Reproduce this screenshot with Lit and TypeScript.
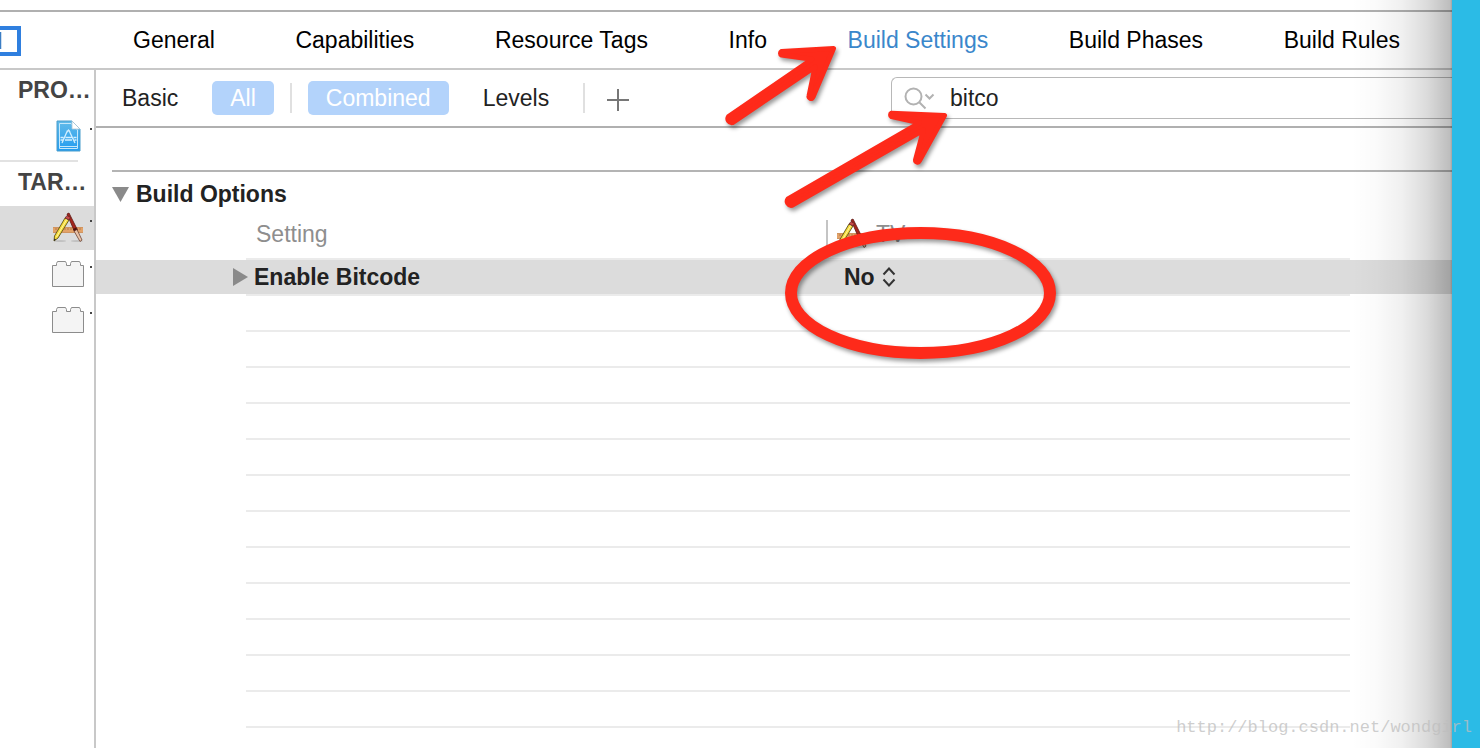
import { LitElement, html, css } from "lit";
import { customElement, state } from "lit/decorators.js";

const toolsIcon = html`
  <svg class="tools" width="32" height="32" viewBox="0 0 32 32" aria-hidden="true">
    <ellipse cx="8" cy="29" rx="6" ry="1" fill="#000" opacity=".12" />
    <ellipse cx="25" cy="29" rx="6" ry="1" fill="#000" opacity=".12" />
    <rect x="1" y="15" width="30" height="6" fill="#e2a268" />
    <path d="M1 15.5h30M1 20.5h30" stroke="#d09460" stroke-width="1" />
    <path d="M4 16v2M7 16v2M10 16v2M13 16v2M16 16v2M19 16v2M22 16v2M25 16v2M28 16v2" stroke="#b57a48" stroke-width="1" />
    <path d="M15 2l2-1 8.500 17-3 1.500z" fill="#a5261d" stroke="#5e1712" stroke-width=".8" />
    <path d="M22 19l3-1.500 5 10.500-2 1.500z" fill="#e9c3a8" stroke="#6c4030" stroke-width=".8" />
    <path d="M21.500 18l3-1.500" stroke="#47120e" stroke-width="2" />
    <path d="M13 6l4 2L6 26l-4 3 .5-5z" fill="#f6dc3c" stroke="#5d5119" stroke-width=".9" />
    <path d="M15 7L4.500 25" stroke="#fff6a0" stroke-width="1" />
    <path d="M13 6l2-2.500 3.500 2L17 8z" fill="#c84a4a" stroke="#5c2020" stroke-width=".7" />
    <path d="M2.300 26.500L2 29l2-1.400z" fill="#222" />
  </svg>
`;

const projectIcon = html`
  <svg width="26" height="32" viewBox="0 0 26 32" aria-hidden="true">
    <defs>
      <linearGradient id="doc" x1="0" y1="0" x2="0" y2="1">
        <stop offset="0" stop-color="#62bbe9" />
        <stop offset="1" stop-color="#229cf0" />
      </linearGradient>
    </defs>
    <path d="M1 1h15l8 8v22H1z" fill="url(#doc)" stroke="#4b9dcc" />
    <path d="M3.500 3.500h11.500l6.500 6.500v18.500h-18z" fill="none" stroke="#c5e8fb" stroke-width="1" />
    <path d="M16 1v8h8z" fill="#fff" stroke="#a8c5d6" stroke-width=".8" />
    <path d="M11.500 10.500L6 23M13 10.500L19 23M11 12l1.500-2 1.500 2M4.500 17.500h3M9.500 17.500h6M17.500 17.500h3M4.500 20h2.500M9 20h7M18.500 20h2" fill="none" stroke="#d2efff" stroke-width="1.300" />
    <path d="M4 26.500h17" stroke="#c5e8fb" />
  </svg>
`;

const brickIcon = html`
  <svg width="32" height="28" viewBox="0 0 32 28" aria-hidden="true">
    <path d="M.5 5.500h4v-2l1-2h8l1 2v2h4v-2l1-2h8l1 2v2h3v21H.5z" fill="#f4f4f4" stroke="#8c8c8c" />
  </svg>
`;

@customElement("app-root")
export class AppRoot extends LitElement {
  static styles = css`
    :host {
      display: block;
      font: 23px/28px "Liberation Sans", Arial, sans-serif;
      color: #222;
    }
    * {
      box-sizing: border-box;
    }
    button,
    input,
    select {
      font: inherit;
      color: inherit;
      margin: 0;
      padding: 0;
      border: 0;
      background: none;
    }
    svg {
      display: block;
      flex: none;
    }
    .desktop {
      position: relative;
      display: flex;
      height: 100vh;
      min-height: 400px;
      padding-right: 28px;
      overflow: hidden;
      background: #2bbbe6;
    }
    .window {
      position: relative;
      flex: 1;
      min-width: 0;
      display: flex;
      flex-direction: column;
      padding-top: 10px;
      overflow: hidden;
      background: #fff;
    }
    .window::after {
      content: "";
      position: absolute;
      inset: 0 0 0 auto;
      width: 100px;
      pointer-events: none;
      background: linear-gradient(
        to right,
        rgba(0, 0, 0, 0),
        rgba(0, 0, 0, 0.02) 25%,
        rgba(0, 0, 0, 0.06) 50%,
        rgba(0, 0, 0, 0.14) 75%,
        rgba(0, 0, 0, 0.26) 98%,
        rgba(0, 0, 0, 0.36)
      );
    }
    .top {
      display: flex;
      align-items: center;
      height: 60px;
      border-top: 2px solid #b0b0b0;
      border-bottom: 2px solid #c8c8c8;
    }
    .tabs {
      flex: 1;
      display: flex;
      justify-content: space-between;
      padding: 0 52px 0 111px;
      color: #000;
    }
    .tab {
      white-space: nowrap;
    }
    .tab.on {
      color: #3a87cb;
    }
    .body {
      flex: 1;
      min-height: 0;
      display: flex;
    }
    .side {
      flex: none;
      width: 96px;
      border-right: 2px solid #c8c8c8;
    }
    .side h2 {
      margin: 0;
      padding: 6px 0 0 18px;
      height: 44px;
      font-size: 23px;
      font-weight: bold;
      color: #444;
      white-space: nowrap;
    }
    .item {
      display: flex;
      align-items: center;
      justify-content: flex-end;
      gap: 6px;
      width: 100%;
      height: 44px;
      margin-bottom: 2px;
      padding-right: 2px;
    }
    .item.on {
      background: #dcdcdc;
    }
    .item::after {
      content: "";
      width: 2px;
      height: 2px;
      margin-bottom: 14px;
      background: #444;
    }
    .item.project {
      gap: 8px;
    }
    .rule {
      width: 78px;
      height: 2px;
      background: #e2e2e2;
    }
    .main {
      flex: 1;
      min-width: 0;
      display: flex;
      flex-direction: column;
    }
    .filters {
      display: flex;
      align-items: center;
      gap: 16px;
      height: 58px;
      padding-left: 8px;
      border-bottom: 2px solid #b0b0b0;
    }
    .pill {
      height: 34px;
      padding: 0 18px;
      border-radius: 5px;
    }
    .pill.on {
      background: #b3d3fb;
      color: #fff;
    }
    .bar {
      width: 2px;
      height: 30px;
      background: #e0e0e0;
    }
    .plus {
      padding: 4px 6px 0;
    }
    .search {
      flex: 0 1 561px;
      display: flex;
      align-items: center;
      gap: 14px;
      height: 42px;
      margin-left: auto;
      padding-left: 12px;
      border: 1px solid #b8b8b8;
      border-right: 0;
      border-radius: 6px 0 0 6px;
    }
    .search input {
      flex: 1;
      min-width: 0;
      outline: 0;
    }
    .group {
      display: flex;
      align-items: center;
      gap: 7px;
      height: 46px;
      margin: 42px 0 0 16px;
      border-top: 2px solid #b4b4b4;
    }
    .group h3 {
      margin: 0;
      font-size: 23px;
    }
    table {
      width: 100%;
      table-layout: fixed;
      border-spacing: 0;
    }
    th,
    td {
      padding: 0;
      text-align: left;
    }
    .gutter {
      width: 150px;
    }
    .name {
      width: 580px;
    }
    .margin {
      width: 102px;
    }
    thead th {
      height: 44px;
      padding-bottom: 6px;
      font-weight: normal;
      color: #8e8e8e;
    }
    thead .line {
      border-bottom: 2px solid #ebebeb;
    }
    thead .label {
      padding-left: 10px;
    }
    .target {
      display: flex;
      align-items: center;
      gap: 8px;
      height: 28px;
      padding-left: 8px;
      border-left: 2px solid #c4c4c4;
    }
    tbody td {
      height: 34px;
      background: #dcdcdc;
      font-weight: bold;
    }
    tbody .label {
      padding-left: 8px;
    }
    .more {
      display: block;
      margin-left: auto;
    }
    .value {
      display: grid;
      align-items: center;
      width: 52px;
      margin-left: 18px;
    }
    .value > * {
      grid-area: 1 / 1;
    }
    .value select {
      width: 100%;
      height: 28px;
      appearance: none;
      font-weight: bold;
    }
    .value svg {
      justify-self: end;
      pointer-events: none;
    }
    .lines {
      flex: 1;
      margin: 0 102px 0 150px;
      background: repeating-linear-gradient(#ebebeb 0 2px, #fff 2px 36px);
    }
    .marks {
      position: absolute;
      top: 0;
      left: 0;
      pointer-events: none;
      filter: drop-shadow(2px 3px 2px rgba(0, 0, 0, 0.4));
    }
    .watermark {
      position: absolute;
      right: 8px;
      bottom: 6px;
      font: 17px/28px "Liberation Mono", monospace;
      color: rgba(190, 190, 190, 0.75);
    }
  `;

  @state() private tab = "Build Settings";
  @state() private scope = "All";
  @state() private view = "Combined";

  private tabs = ["General", "Capabilities", "Resource Tags", "Info", "Build Settings", "Build Phases", "Build Rules"];

  private pill(label: string, on: boolean, pick: () => void) {
    return html`<button class="pill ${on ? "on" : ""}" aria-pressed=${on} @click=${pick}>${label}</button>`;
  }

  render() {
    return html`
      <div class="desktop">
        <div class="window">
          <header class="top">
            <button aria-label="Toggle target list">
              <svg width="22" height="32" viewBox="0 0 22 32">
                <path d="M0 4h19v26H0" fill="none" stroke="#2f7fdf" stroke-width="4" />
                <path d="M.5 8v17" stroke="#3b7dc4" stroke-width="1.500" />
              </svg>
            </button>
            <nav class="tabs">
              ${this.tabs.map(
                (t) => html`<button class="tab ${t === this.tab ? "on" : ""}" @click=${() => (this.tab = t)}>${t}</button>`
              )}
            </nav>
          </header>
          <div class="body">
            <aside class="side">
              <h2>PRO…</h2>
              <button class="item project" aria-label="Project">${projectIcon}</button>
              <div class="rule"></div>
              <h2>TAR…</h2>
              <button class="item on" aria-label="Application target">${toolsIcon}</button>
              <button class="item" aria-label="Extension target">${brickIcon}</button>
              <button class="item" aria-label="Test target">${brickIcon}</button>
            </aside>
            <main class="main">
              <div class="filters">
                ${this.pill("Basic", this.scope === "Basic", () => (this.scope = "Basic"))}
                ${this.pill("All", this.scope === "All", () => (this.scope = "All"))}
                <span class="bar"></span>
                ${this.pill("Combined", this.view === "Combined", () => (this.view = "Combined"))}
                ${this.pill("Levels", this.view === "Levels", () => (this.view = "Levels"))}
                <span class="bar"></span>
                <button class="plus" aria-label="Add">
                  <svg width="22" height="22" viewBox="0 0 22 22"><path d="M11 0v22M0 11h22" stroke="#777" stroke-width="2" /></svg>
                </button>
                <label class="search">
                  <svg width="32" height="24" viewBox="0 0 32 24" aria-hidden="true">
                    <g fill="none" stroke="#b2b2b2" stroke-width="2">
                      <circle cx="9.500" cy="10.500" r="8" />
                      <path d="M15 16l6.500 6.500M21.500 8.500l4 4 4-4" />
                    </g>
                  </svg>
                  <input type="text" aria-label="Search settings" .value=${"bitco"} />
                </label>
              </div>
              <div class="group">
                <button aria-label="Collapse Build Options">
                  <svg width="17" height="15" viewBox="0 0 17 15"><path d="M0 0h17L8.500 15z" fill="#8a8a8a" /></svg>
                </button>
                <h3>Build Options</h3>
              </div>
              <table>
                <thead>
                  <tr>
                    <th class="gutter"></th>
                    <th class="name line label">Setting</th>
                    <th class="line"><div class="target">${toolsIcon}<span>TV</span></div></th>
                    <th class="margin"></th>
                  </tr>
                </thead>
                <tbody>
                  <tr>
                    <td>
                      <button class="more" aria-label="Expand Enable Bitcode">
                        <svg width="18" height="18" viewBox="0 0 18 18" overflow="visible"><path d="M5 0l15 9-15 9z" fill="#8a8a8a" /></svg>
                      </button>
                    </td>
                    <td class="label"><label for="bitcode">Enable Bitcode</label></td>
                    <td>
                      <div class="value">
                        <select id="bitcode">
                          <option selected>No</option>
                          <option>Yes</option>
                        </select>
                        <svg width="14" height="20" viewBox="0 0 14 20" aria-hidden="true">
                          <path d="M1.500 7.500L7 1.500l5.500 6M1.500 12.500l5.500 6 5.500-6" fill="none" stroke="#333" stroke-width="2" />
                        </svg>
                      </div>
                    </td>
                    <td></td>
                  </tr>
                </tbody>
              </table>
              <div class="lines"></div>
            </main>
          </div>
        </div>
        <svg class="marks" width="1080" height="380" viewBox="0 0 1080 380" aria-hidden="true">
          <g fill="#fe2a1a" stroke="#fe2a1a" stroke-width="5" stroke-linejoin="round">
            <path d="M833.500 48.500L781.500 51.500A2 2 0 0 0 781.500 55L812 59.200L728.500 116.500A4 4 0 0 0 732.500 122.600L815 67L809 96A2 2 0 0 0 813 97Z" />
            <path d="M944.500 115.500L891.500 113.200A2 2 0 0 0 891.500 116.600L919.500 122.800L788 199A4 4 0 0 0 792 205.300L923.500 130L915.500 160A2 2 0 0 0 919.300 161Z" />
          </g>
          <ellipse cx="920.5" cy="293" rx="129.500" ry="60" fill="none" stroke="#fe2a1a" stroke-width="12" />
        </svg>
        <div class="watermark">http://blog.csdn.net/wondgirl</div>
      </div>
    `;
  }
}
